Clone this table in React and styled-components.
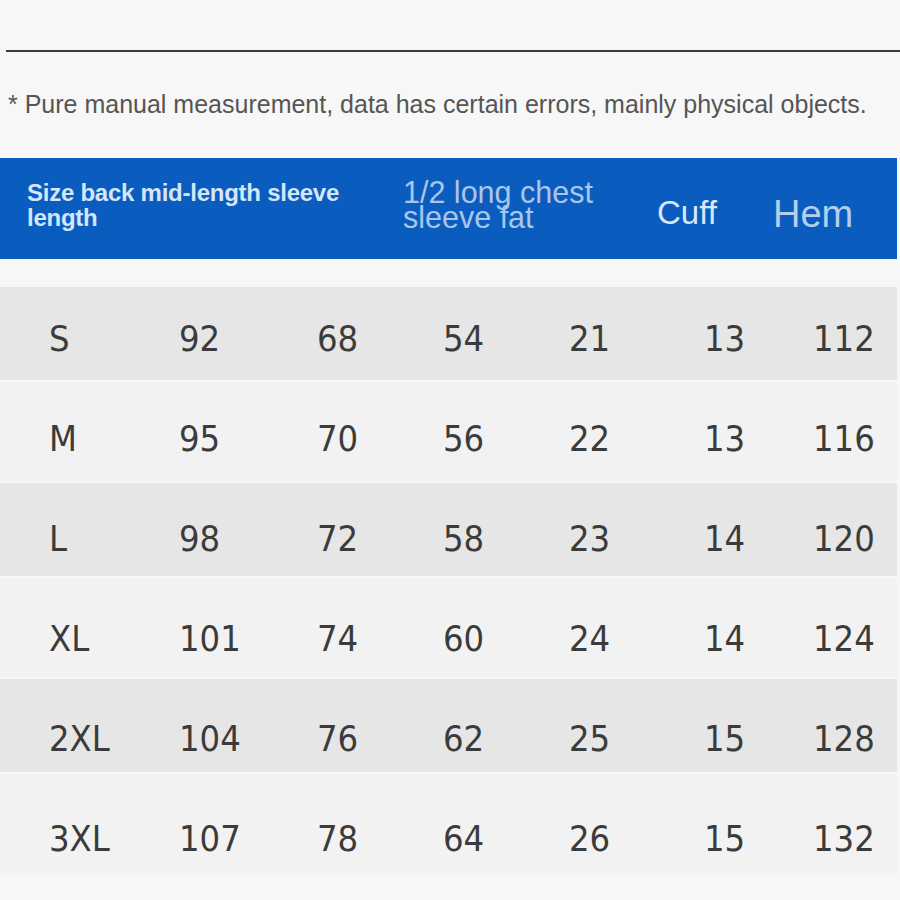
import React from "react";
import styled, { createGlobalStyle } from "styled-components";

const Global = createGlobalStyle`
  html, body { margin: 0; padding: 0; background: #f7f7f7; }
  #root { width: 900px; min-height: 900px; }
`;

const Page = styled.div`
  width: 900px;
  height: 900px;
  background: #f7f7f7;
  padding-top: 50px;
  box-sizing: border-box;
  overflow: hidden;
`;

const Rule = styled.div`
  margin-left: 6px;
  height: 2px;
  background: #3a3a3a;
`;

const Note = styled.p`
  margin: 0;
  padding: 38px 0 0 8px;
  height: 106px;
  box-sizing: border-box;
  font-family: "Liberation Sans", Arial, sans-serif;
  font-size: 25px;
  line-height: 28px;
  color: #555;
  white-space: nowrap;
`;

const Header = styled.div`
  width: 897px;
  height: 101px;
  background: #0a5dbf;
  display: grid;
  grid-template-columns: 376px 254px 116px 1fr;
  padding-left: 27px;
  box-sizing: border-box;
`;

const HeadCell = styled.div`
  font-family: "Liberation Sans", Arial, sans-serif;
  color: ${(p) => p.$color};
  font-size: ${(p) => p.$size}px;
  font-weight: ${(p) => (p.$bold ? 700 : 400)};
  line-height: ${(p) => p.$lh}px;
  letter-spacing: ${(p) => p.$ls || 0}px;
  padding-top: ${(p) => p.$top}px;
  white-space: pre-line;
`;

const Body = styled.div`
  margin-top: 28px;
  display: flex;
  flex-direction: column;
  gap: 2px;
  width: 897px;
`;

const Row = styled.div`
  height: ${(p) => (p.$shade ? 93 : 99)}px;
  background: ${(p) => (p.$shade ? "#e6e6e6" : "#f2f2f2")};
  display: grid;
  grid-template-columns: 130px 138px 126px 126px 135px 109px 1fr;
  align-items: start;
  padding: ${(p) => p.$textTop}px 0 0 49px;
  box-sizing: border-box;
`;

const Cell = styled.div`
  font-family: "DejaVu Sans Condensed", "DejaVu Sans", sans-serif;
  font-size: 36px;
  line-height: 40px;
  color: #3b3b3b;
`;

const rows = [
  { top: 32, cells: ["S", 92, 68, 54, 21, 13, 112] },
  { top: 37, cells: ["M", 95, 70, 56, 22, 13, 116] },
  { top: 36, cells: ["L", 98, 72, 58, 23, 14, 120] },
  { top: 41, cells: ["XL", 101, 74, 60, 24, 14, 124] },
  { top: 40, cells: ["2XL", 104, 76, 62, 25, 15, 128] },
  { top: 45, cells: ["3XL", 107, 78, 64, 26, 15, 132] },
];

export default function App() {
  return (
    <Page>
      <Global />
      <Rule />
      <Note>* Pure manual measurement, data has certain errors, mainly physical objects.</Note>
      <Header>
        <HeadCell $color="#d4e6f8" $size={24} $bold $lh={25} $ls={-0.25} $top={22}>
          {"Size back mid-length sleeve\nlength"}
        </HeadCell>
        <HeadCell $color="#a9c6ea" $size={30.5} $lh={25} $top={22}>
          {"1/2 long chest\nsleeve fat"}
        </HeadCell>
        <HeadCell $color="#d8e8f8" $size={33} $lh={40} $top={35}>
          Cuff
        </HeadCell>
        <HeadCell $color="#b3cfee" $size={38} $lh={40} $top={36}>
          Hem
        </HeadCell>
      </Header>
      <Body>
        {rows.map((r, i) => (
          <Row key={r.cells[0]} $shade={i % 2 === 0} $textTop={r.top}>
            {r.cells.map((v, j) => (
              <Cell key={j}>{v}</Cell>
            ))}
          </Row>
        ))}
      </Body>
    </Page>
  );
}
